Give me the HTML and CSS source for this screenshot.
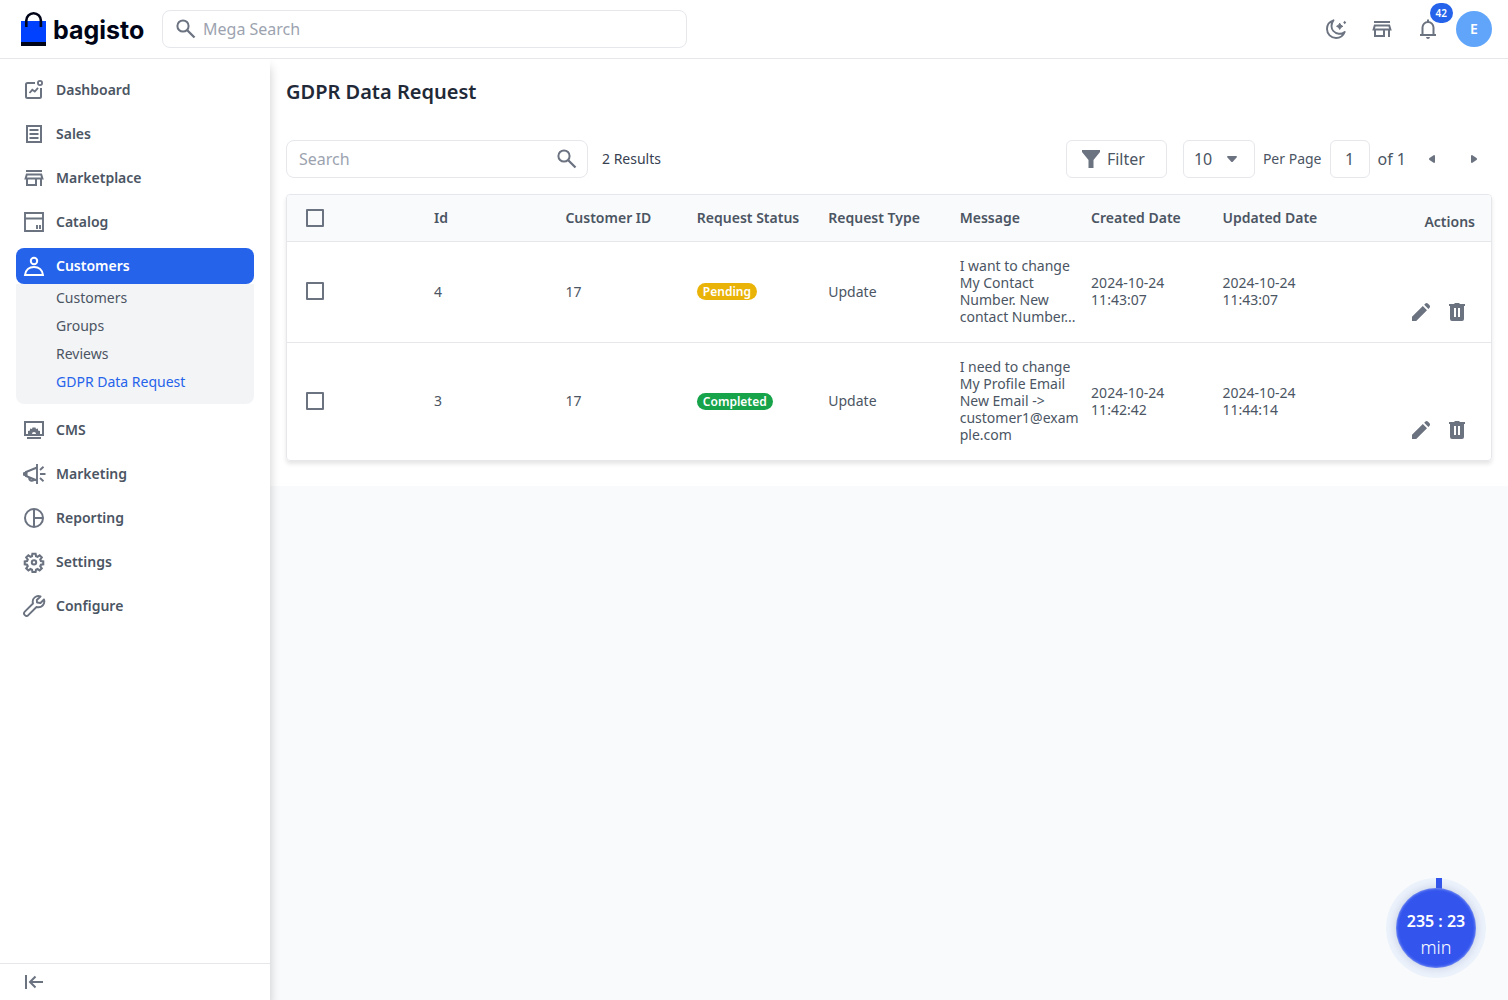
FILE: index.html
```html
<!DOCTYPE html>
<html lang="en">
<head>
<meta charset="utf-8">
<meta name="viewport" content="width=device-width, initial-scale=1">
<title>GDPR Data Request</title>
<link rel="stylesheet" href="styles.css">
</head>
<body>
<svg class="sprite" aria-hidden="true">
  <symbol id="i-search" viewBox="0 0 24 24"><circle cx="9" cy="9" r="5.600" fill="none" stroke="currentColor" stroke-width="2"/><path d="M13 13l7.500 7.500" fill="none" stroke="currentColor" stroke-width="2.300"/></symbol>
  <symbol id="i-store" viewBox="0 0 24 24"><path d="M4 5h16M3.600 12.500L4.800 8.500h14.400l1.200 4zM5 12.500V19h9v-6.500M19 12.500V20" fill="none" stroke="currentColor" stroke-width="2"/></symbol>
  <symbol id="i-edit" viewBox="0 0 24 24"><path d="M3 21v-4.200L13.800 6.100l4.200 4.200L7.200 21zM15.200 4.700l1.200-1.200q1.200-1 2.400 0l1.800 1.800q1 1.200 0 2.400l-1.200 1.200z" fill="currentColor"/></symbol>
  <symbol id="i-trash" viewBox="0 0 24 24"><path fill-rule="evenodd" fill="currentColor" d="M4 4h5l1-1h4l1 1h5v2h-1v13q0 2-2 2H7q-2 0-2-2V6H4zM9 8v9h2V8zM13 8v9h2V8z"/></symbol>
</svg>

<header class="topbar">
  <a class="brand" href="#" aria-label="bagisto">
    <svg class="brand-mark" viewBox="0 0 26 36" aria-hidden="true"><path d="M0 10h25v22H0z" fill="#0041ff"/><path d="M0 31h25v4H0z" fill="#000417"/><path d="M5.300 16V9.500a7.300 7.300 0 0 1 14.600 0V16" fill="none" stroke="#000417" stroke-width="2.600"/></svg>
    <span class="brand-name">bagisto</span>
  </a>
  <label class="mega">
    <svg class="icon"><use href="#i-search"/></svg>
    <input type="text" placeholder="Mega Search" aria-label="Mega Search">
  </label>
  <div class="tools">
    <button class="tool" type="button" aria-label="Dark mode"><svg class="icon" viewBox="0 0 24 24"><path d="M9.500 3.300C5.500 4.500 3 8 3 12c0 5 4 9 9 9 4 0 7.300-2.300 8.700-6-2 1.500-4 2-6 1.700C10 16 7.500 12.500 7.500 9c0-2.300.700-4.200 2-5.700z" fill="none" stroke="currentColor" stroke-width="1.900" stroke-linejoin="round"/><path d="M15.700 6.200l1.100 2 2 1.100-2 1.100-1.100 2-1.100-2-2-1.100 2-1.100z" fill="currentColor" stroke="currentColor"/><path d="M20.700 3.800l1.500 1.700-1.500 1.700-1.500-1.700z" fill="currentColor"/></svg></button>
    <a class="tool" href="#" aria-label="Visit shop"><svg class="icon"><use href="#i-store"/></svg></a>
    <button class="tool" type="button" aria-label="Notifications"><svg class="icon" viewBox="0 0 24 24"><path d="M4 18h16M6.500 18v-7.500a5.500 5.500 0 0 1 11 0V18M12 5V2.500" fill="none" stroke="currentColor" stroke-width="2"/><path d="M10 20h4q-.300 2-2 2t-2-2z" fill="currentColor"/></svg><span class="count">42</span></button>
    <button class="avatar" type="button">E</button>
  </div>
</header>

<div class="shell">
  <aside class="sidebar">
    <nav class="menu">
      <a class="menu-link" href="#"><svg class="icon" viewBox="0 0 24 24"><path d="M13 5H5.500A1.500 1.500 0 0 0 4 6.500v12A1.500 1.500 0 0 0 5.500 20h12a1.500 1.500 0 0 0 1.500-1.500V10" fill="none" stroke="currentColor" stroke-width="2"/><circle cx="18" cy="5" r="2.100" fill="none" stroke="currentColor" stroke-width="1.800"/><path d="M7.500 15l2.800-3.200 2.500 1.700L16 9.800" fill="none" stroke="currentColor" stroke-width="1.800"/></svg>Dashboard</a>
      <a class="menu-link" href="#"><svg class="icon" viewBox="0 0 24 24"><path d="M5 4h14v16H5zM7.500 8h9M7.500 12h9M7.500 16h9" fill="none" stroke="currentColor" stroke-width="2"/></svg>Sales</a>
      <a class="menu-link" href="#"><svg class="icon"><use href="#i-store"/></svg>Marketplace</a>
      <a class="menu-link" href="#"><svg class="icon" viewBox="0 0 24 24"><path d="M3 3h18v18H3zM3 8.500h18M15 15v4M18 15v4" fill="none" stroke="currentColor" stroke-width="1.900"/></svg>Catalog</a>
      <div class="menu-group">
        <a class="menu-link active" href="#"><svg class="icon" viewBox="0 0 24 24"><circle cx="12" cy="7" r="3.200" fill="none" stroke="currentColor" stroke-width="2"/><path d="M3 21c.600-5 4.300-8 9-8s8.400 3 9 8z" fill="none" stroke="currentColor" stroke-width="2"/></svg>Customers</a>
        <div class="submenu">
          <a href="#">Customers</a>
          <a href="#">Groups</a>
          <a href="#">Reviews</a>
          <a class="current" href="#" aria-current="page">GDPR Data Request</a>
        </div>
      </div>
      <a class="menu-link" href="#"><svg class="icon" viewBox="0 0 24 24"><path d="M3 4h18v13H3zM5 20h14" fill="none" stroke="currentColor" stroke-width="2"/><path d="M6 16v-3l2-.500V10.500l2 .500.500-1.500h3l.500 1.500 2-.500v2l2 .500v3h-4a2 2 0 0 0-4 0z" fill="currentColor"/></svg>CMS</a>
      <a class="menu-link" href="#"><svg class="icon" viewBox="0 0 24 24"><path d="M15 2v20M15 5.500L4 10v4l11 4.500M7 15.500c0 4 4.500 4 5 1.500M18 12h5.500M18 8l3.500-3.200M18 16l3.500 3.200" fill="none" stroke="currentColor" stroke-width="1.900"/><path d="M1 10.500L5.500 9v6L1 13.500z" fill="currentColor"/></svg>Marketing</a>
      <a class="menu-link" href="#"><svg class="icon" viewBox="0 0 24 24"><circle cx="12" cy="12" r="9" fill="none" stroke="currentColor" stroke-width="2"/><path d="M12 3v18M12 12h9" fill="none" stroke="currentColor" stroke-width="2"/></svg>Reporting</a>
      <a class="menu-link" href="#"><svg class="icon" viewBox="-1 -1 26 26"><path d="M10.300 3h3.400l.500 2.700 1.600.700 2.300-1.600 2.300 2.300-1.600 2.300.700 1.600 2.500.400v3.200l-2.500.400-.700 1.600 1.600 2.300-2.300 2.300-2.300-1.600-1.600.700-.500 2.500h-3.400l-.500-2.500-1.600-.700-2.300 1.600-2.300-2.300 1.600-2.300-.700-1.600-2.500-.400v-3.200l2.500-.400.700-1.600-1.600-2.300 2.300-2.300 2.300 1.600 1.600-.700z" fill="none" stroke="currentColor" stroke-width="2.300"/><circle cx="12" cy="12.400" r="2.400" fill="none" stroke="currentColor" stroke-width="2.200"/></svg>Settings</a>
      <a class="menu-link" href="#"><svg class="icon" viewBox="0 0 24 24"><path d="M18.500 2.500c-4-1.500-9 1.500-7.500 7L2.800 17.700c-2.200 2.300 1.200 5.700 3.500 3.500L14.500 13c5 1.500 9-3 7.500-7.500L18.500 9 15 8.500 14.800 6z" fill="none" stroke="currentColor" stroke-width="1.900" stroke-linejoin="round"/></svg>Configure</a>
    </nav>
    <button class="collapse" type="button" aria-label="Collapse menu"><svg class="icon" viewBox="0 0 24 24"><path d="M4 5v14M21 12H8.500M13.500 6.500L8 12l5.500 5.500" fill="none" stroke="currentColor" stroke-width="2"/></svg></button>
  </aside>

  <main class="content">
    <section class="panel">
      <h1>GDPR Data Request</h1>
      <div class="toolbar">
        <label class="search"><input type="text" placeholder="Search" aria-label="Search"><svg class="icon"><use href="#i-search"/></svg></label>
        <span class="results">2 Results</span>
        <div class="paging">
          <button class="filter" type="button"><svg class="icon" viewBox="0 0 24 24"><path d="M3 3h18v2l-6.500 8v8h-5v-8L3 5z" fill="currentColor"/></svg>Filter</button>
          <span class="per-page"><select id="per-page"><option>10</option></select><svg class="caret" viewBox="0 0 10 6" aria-hidden="true"><path d="M0 1q0-1 1-1h8q1 0 1 1L6 5.500q-1 1-2 0z" fill="currentColor"/></svg></span>
          <label for="per-page">Per Page</label>
          <input class="page" type="text" value="1" aria-label="Page">
          <span class="total">of 1</span>
          <div class="steps">
            <button class="step" type="button" aria-label="Previous page"><svg viewBox="0 0 6 8"><path d="M6 1v6q0 1-1 1L.500 5q-1-1 0-2L5 0q1 0 1 1z" fill="currentColor"/></svg></button>
            <button class="step" type="button" aria-label="Next page"><svg viewBox="0 0 6 8"><path d="M0 1v6q0 1 1 1l4.500-3q1-1 0-2L1 0Q0 0 0 1z" fill="currentColor"/></svg></button>
          </div>
        </div>
      </div>

      <div class="grid">
        <table>
          <colgroup><col class="col-check"><col span="7"><col class="col-actions"></colgroup>
          <thead>
            <tr><th><input type="checkbox" aria-label="Select all"></th><th>Id</th><th>Customer ID</th><th>Request Status</th><th>Request Type</th><th>Message</th><th>Created Date</th><th>Updated Date</th><th class="actions">Actions</th></tr>
          </thead>
          <tbody>
            <tr>
              <td><input type="checkbox" aria-label="Select request 4"></td><td>4</td><td>17</td>
              <td><span class="badge pending">Pending</span></td><td>Update</td>
              <td class="message">I want to change My Contact Number. New contact Number...</td>
              <td>2024-10-24 11:43:07</td><td>2024-10-24 11:43:07</td>
              <td class="actions"><button type="button" aria-label="Edit"><svg class="icon"><use href="#i-edit"/></svg></button><button type="button" aria-label="Delete"><svg class="icon"><use href="#i-trash"/></svg></button></td>
            </tr>
            <tr>
              <td><input type="checkbox" aria-label="Select request 3"></td><td>3</td><td>17</td>
              <td><span class="badge completed">Completed</span></td><td>Update</td>
              <td class="message">I need to change My Profile Email New Email -&gt; customer1@exam<wbr>ple.com</td>
              <td>2024-10-24 11:42:42</td><td>2024-10-24 11:44:14</td>
              <td class="actions"><button type="button" aria-label="Edit"><svg class="icon"><use href="#i-edit"/></svg></button><button type="button" aria-label="Delete"><svg class="icon"><use href="#i-trash"/></svg></button></td>
            </tr>
          </tbody>
        </table>
      </div>
    </section>
  </main>
</div>

<div class="timer" role="timer">
  <div class="timer-face"><span class="timer-value">235 : 23</span><span class="timer-unit">min</span></div>
</div>
</body>
</html>
```
FILE: styles.css
```css
* { box-sizing: border-box; }

body {
  margin: 0;
  min-height: 100vh;
  display: flex;
  flex-direction: column;
  background: #f9fafb;
  color: #4b5563;
  font: 14px/20px "Noto Sans", "Open Sans", sans-serif;
}

a { color: inherit; text-decoration: none; }
button, input, select { font: inherit; color: inherit; }
button { padding: 0; border: 0; background: none; cursor: pointer; }
input::placeholder { color: #9ca3af; opacity: 1; }

.sprite { position: absolute; width: 0; height: 0; }
.icon { display: block; flex: none; width: 24px; height: 24px; color: #6b7280; }

/* Top bar */
.topbar {
  display: flex;
  align-items: center;
  height: 59px;
  padding: 0 16px 0 21px;
  background: #fff;
  border-bottom: 1px solid #e5e7eb;
}
.brand { display: flex; align-items: center; gap: 6px; width: 141px; color: #000417; }
.brand-mark { width: 26px; height: 36px; }
.brand-name { padding-top: 2px; font: 700 25px/36px Inter, sans-serif; }
.mega {
  display: flex;
  align-items: center;
  gap: 5px;
  flex: 0 1 525px;
  height: 38px;
  padding: 0 12px 0 11px;
  border: 1px solid #e5e7eb;
  border-radius: 8px;
}
.mega input, .search input { flex: 1; min-width: 0; padding: 0; border: 0; outline: 0; background: none; font-size: 16px; }
.tools { display: flex; align-items: center; gap: 10px; margin-left: auto; }
.tool { position: relative; padding: 6px; }
.count {
  position: absolute;
  top: -8px;
  right: -7px;
  padding: 0 6px;
  border-radius: 10px;
  background: #2563eb;
  color: #fff;
  font-size: 10px;
  font-weight: 600;
}
.avatar { width: 36px; height: 36px; border-radius: 50%; background: #60a5fa; color: #fff; font-weight: 600; }

/* Side bar */
.shell { display: flex; flex: 1; }
.sidebar {
  display: flex;
  flex-direction: column;
  flex: 0 0 270px;
  background: #fff;
  box-shadow: 0 8px 10px rgba(0, 0, 0, 0.2);
  clip-path: inset(0 -20px 0 0);
  z-index: 1;
}
.menu { display: flex; flex-direction: column; gap: 8px; flex: 1; padding: 13px 16px; }
.menu-link { display: flex; align-items: center; gap: 10px; height: 36px; padding: 0 6px; border-radius: 8px; font-weight: 600; }
.menu-link.active { background: #2563eb; color: #fff; }
.menu-link.active .icon { color: #fff; }
.menu-group { border-radius: 8px; background: linear-gradient(#fff 36px, #f3f4f6 36px); }
.submenu { padding-bottom: 8px; }
.submenu a { display: block; padding-left: 40px; line-height: 28px; }
.submenu .current { color: #2563eb; }
.collapse { display: flex; align-items: center; height: 37px; padding: 0 22px; border-top: 1px solid #e5e7eb; }

/* Content */
.content { flex: 1; min-width: 0; }
.panel { padding: 20px 16px 25px; background: #fff; }
h1 { margin: 0 0 36px; color: #1f2937; font-size: 20px; font-weight: 600; line-height: 25px; }

.toolbar { display: flex; align-items: center; margin-bottom: 16px; }
.search {
  display: flex;
  align-items: center;
  width: 302px;
  height: 38px;
  padding: 0 8px 0 12px;
  border: 1px solid #e5e7eb;
  border-radius: 8px;
}
.results { margin-left: 14px; color: #374151; }
.paging { display: flex; align-items: center; gap: 8px; margin-left: auto; }
.filter {
  display: flex;
  align-items: center;
  gap: 4px;
  width: 101px;
  height: 38px;
  margin-right: 8px;
  padding: 0 12px;
  border: 1px solid #e5e7eb;
  border-radius: 6px;
  font-size: 16px;
}
.per-page { position: relative; }
.per-page select {
  display: block;
  width: 72px;
  height: 38px;
  padding: 0 10px;
  appearance: none;
  border: 1px solid #e5e7eb;
  border-radius: 6px;
  background: #fff;
  font-size: 16px;
}
.caret { position: absolute; top: 16px; right: 18px; width: 10px; height: 6px; color: #6b7280; pointer-events: none; }
.page { width: 40px; height: 38px; padding: 0; border: 1px solid #e5e7eb; border-radius: 6px; text-align: center; font-size: 16px; }
.total { font-size: 16px; }
.steps { display: flex; gap: 6px; }
.step { display: flex; align-items: center; justify-content: center; width: 36px; height: 36px; }
.step svg { width: 6px; height: 8px; color: #6b7280; }

/* Data grid */
.grid { overflow: hidden; border: 1px solid #e5e7eb; border-radius: 4px; box-shadow: 0 3px 4px rgba(0, 0, 0, 0.1); }
table { width: 100%; table-layout: fixed; border-collapse: separate; border-spacing: 0; }
.col-check { width: 147px; }
.col-actions { width: 137px; }
th { height: 47px; padding: 0 10px 0 0; border-bottom: 1px solid #e5e7eb; background: #f9fafb; text-align: left; font-weight: 600; }
td { padding: 15px 10px 17px 0; line-height: 17px; vertical-align: middle; }
tbody tr + tr td { border-top: 1px solid #e5e7eb; }
th:first-child, td:first-child { padding-left: 19px; }
.message { overflow-wrap: anywhere; padding-right: 4px; }
th.actions { padding: 8px 16px 0 0; text-align: right; }
td.actions { padding: 0 16px 12px 0; text-align: right; vertical-align: bottom; white-space: nowrap; line-height: 0; }
.actions button { padding: 6px; vertical-align: bottom; }
input[type="checkbox"] { display: block; width: 18px; height: 18px; margin: 0; appearance: none; border: 2px solid #6b7280; border-radius: 1px; }
input[type="checkbox"]:checked { background: #2563eb; }
.badge { display: inline-block; padding: 0 6px; border-radius: 9px; color: #fff; font-size: 12px; font-weight: 600; line-height: 17px; }
.pending { background: #eab308; }
.completed { background: #16a34a; }

/* Floating session timer */
.timer { position: fixed; right: 22px; bottom: 22px; z-index: 2; padding: 10px; border-radius: 50%; background: #edf3fc; }
.timer::before { content: ""; position: absolute; top: 0; left: 50px; width: 6px; height: 12px; background: #3355ee; }
.timer-face {
  position: relative;
  display: flex;
  flex-direction: column;
  align-items: center;
  justify-content: center;
  width: 80px;
  height: 80px;
  padding-top: 12px;
  border-radius: 50%;
  background: #3355ee;
  box-shadow: 0 0 10px rgba(80, 100, 160, 0.3), inset 0 0 3px rgba(255, 255, 255, 0.6);
  color: #fff;
}
.timer-value { font-size: 16px; font-weight: 600; line-height: 26px; }
.timer-unit { font-size: 18px; font-weight: 300; line-height: 26px; }
```
